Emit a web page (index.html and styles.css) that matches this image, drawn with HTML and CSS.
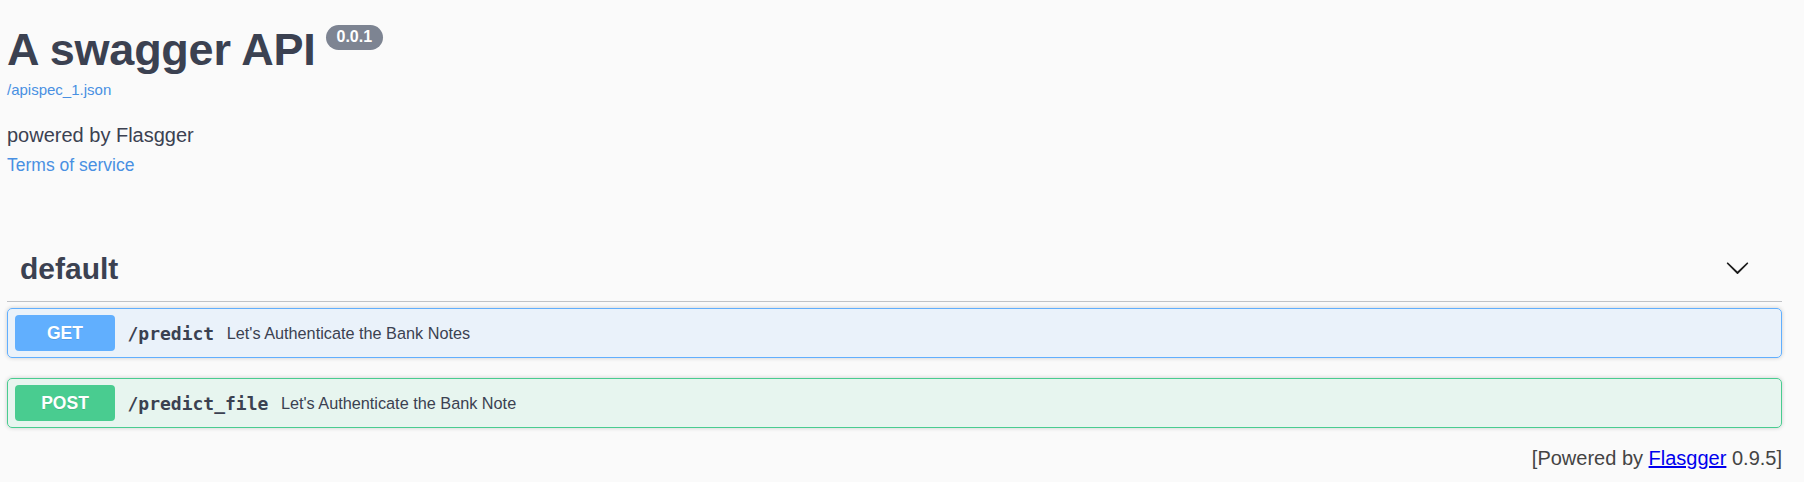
FILE: index.html
```html
<!DOCTYPE html>
<html lang="en">
<head>
<meta charset="utf-8">
<title>Flasgger</title>
<link rel="stylesheet" href="styles.css">
</head>
<body>
<div class="page">
  <section class="info">
    <div class="title-row">
      <h2 class="title">A swagger API</h2>
      <span class="version">0.0.1</span>
    </div>
    <a class="base-url" href="#">/apispec_1.json</a>
    <p class="desc">powered by Flasgger</p>
    <a class="tos" href="#">Terms of service</a>
  </section>

  <section class="tag">
    <div class="tag-header">
      <h3 class="tag-name">default</h3>
      <button class="expand" type="button" aria-label="Collapse">
        <svg viewBox="0 0 20 20" width="25" height="25" aria-hidden="true">
          <path d="M17.418 6.109c.272-.268.709-.268.979 0s.271.701 0 .969l-7.908 7.83c-.27.268-.707.268-.979 0l-7.908-7.83c-.27-.268-.27-.701 0-.969.271-.268.709-.268.979 0L10 13.25l7.418-7.141z"/>
        </svg>
      </button>
    </div>
    <div class="ops">
      <div class="op op-get">
        <span class="method">GET</span>
        <span class="path">/predict</span>
        <span class="summary">Let's Authenticate the Bank Notes</span>
      </div>
      <div class="op op-post">
        <span class="method">POST</span>
        <span class="path">/predict_file</span>
        <span class="summary">Let's Authenticate the Bank Note</span>
      </div>
    </div>
  </section>

  <p class="powered">[Powered by <a href="#">Flasgger</a> 0.9.5]</p>
</div>
</body>
</html>
```

FILE: styles.css
```css
html, body {
  margin: 0;
  padding: 0;
  background: #fafafa;
}

body {
  font-family: "Liberation Sans", Arial, sans-serif;
  color: #3b4151;
}

.page {
  padding: 24px 22px 0 7px;
}

/* ---------- info ---------- */
.title-row {
  display: flex;
  align-items: flex-start;
  height: 52px;
}

.title {
  margin: 0;
  font-size: 45px;
  line-height: 52px;
  font-weight: 700;
  letter-spacing: -0.25px;
  color: #3b4151;
}

.version {
  margin: 1px 0 0 10px;
  padding: 3px 11px 4px;
  border-radius: 57px;
  background: #7d8492;
  color: #fff;
  font-size: 16px;
  line-height: 18px;
  font-weight: 700;
}

.base-url {
  display: block;
  width: max-content;
  margin-top: 5px;
  font-size: 15px;
  line-height: 18px;
  color: #4990e2;
  text-decoration: none;
}

.desc {
  margin: 25px 0 0;
  font-size: 20px;
  line-height: 23px;
  color: #3b4151;
}

.tos {
  display: block;
  width: max-content;
  margin-top: 8px;
  font-size: 17.5px;
  line-height: 20px;
  color: #4990e2;
  text-decoration: none;
}

/* ---------- tag ---------- */
.tag {
  margin-top: 64px;
}

.tag-header {
  display: flex;
  align-items: center;
  justify-content: space-between;
  padding: 13px 32px 15px 13px;
  border-bottom: 1px solid rgba(59, 65, 81, 0.3);
}

.tag-name {
  margin: 0;
  font-size: 30px;
  line-height: 34px;
  font-weight: 700;
  color: #3b4151;
}

.expand {
  display: flex;
  margin: 0 0 4px;
  padding: 0;
  border: 0;
  background: none;
  color: #1b1b1b;
}

.expand svg {
  fill: currentColor;
}

.ops {
  padding-top: 6px;
}

.op {
  display: flex;
  align-items: center;
  margin-bottom: 20px;
  padding: 6px 7px;
  border: 1px solid;
  border-radius: 5px;
  box-shadow: 0 0 4px rgba(0, 0, 0, 0.19);
}

.op:last-child {
  margin-bottom: 19px;
}

.op-get {
  border-color: #61affe;
  background: rgba(97, 175, 254, 0.1);
}

.op-post {
  border-color: #49cc90;
  background: rgba(73, 204, 144, 0.1);
}

.method {
  display: flex;
  align-items: center;
  justify-content: center;
  width: 100px;
  height: 36px;
  border-radius: 4px;
  color: #fff;
  font-size: 17.5px;
  font-weight: 700;
  text-shadow: 0 1px 0 rgba(0, 0, 0, 0.1);
}

.op-get .method {
  background: #61affe;
}

.op-post .method {
  background: #49cc90;
}

.path {
  padding: 0 12.5px;
  font-family: "DejaVu Sans Mono", "Liberation Mono", monospace;
  font-size: 18px;
  font-weight: 700;
  color: #3b4151;
}

.summary {
  font-size: 16.25px;
  color: #3b4151;
}

/* ---------- footer ---------- */
.powered {
  margin: 0;
  text-align: right;
  font-size: 20px;
  line-height: 23px;
  color: #444;
}

.powered a {
  color: #0000ee;
}
```
